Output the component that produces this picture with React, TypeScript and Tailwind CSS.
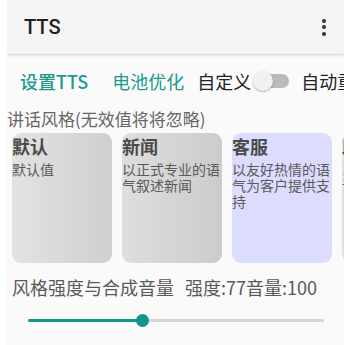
import React from "react";

const font = { fontFamily: '"Noto Sans CJK SC", "Noto Sans", sans-serif' };

type Style = { title: string; desc: string; bg: string };

const styles: Style[] = [
  { title: "默认", desc: "默认值", bg: "bg-gradient-to-r from-[#e3e3e3] to-[#cfcfcf]" },
  { title: "新闻", desc: "以正式专业的语气叙述新闻", bg: "bg-gradient-to-r from-[#dedede] to-[#cccccc]" },
  { title: "客服", desc: "以友好热情的语气为客户提供支持", bg: "bg-[#dcdcfe]" },
  { title: "助理", desc: "以热情而轻松的语气对话", bg: "bg-[#e0e0e0]" },
];

function StyleCard({ s }: { s: Style }) {
  return (
    <div className="flex h-[130px] w-[100px] shrink-0 flex-col overflow-hidden rounded-[9px]">
      <div className={`flex h-full flex-col ${s.bg}`}>
        <div className="h-[26px] text-[18px] font-bold leading-[26px] text-[#4a4a4a]">{s.title}</div>
        <div className="mt-[2px] break-all text-[14px] leading-[16px] text-[#5a5a5a]">{s.desc}</div>
      </div>
    </div>
  );
}

export default function App() {
  const value = 77;
  return (
    <div className="h-[345px] w-[350px] overflow-hidden bg-white" style={font}>
      <div className="ml-[7px] h-[345px] w-[337px] overflow-hidden bg-[#fafafa]">
        {/* toolbar */}
        <div className="relative flex h-[54px] items-center justify-between bg-[#f4f4f4] pl-[17px] pr-[18px] shadow-[0_1px_3px_rgba(0,0,0,0.18)]">
          <span className="text-[20px] font-medium text-[#212121]" style={{ fontFamily: '"Roboto", "Noto Sans", sans-serif' }}>
            TTS
          </span>
          <div className="flex flex-col gap-[2.5px]">
            <span className="h-[4px] w-[4px] rounded-full bg-[#333]" />
            <span className="h-[4px] w-[4px] rounded-full bg-[#333]" />
            <span className="h-[4px] w-[4px] rounded-full bg-[#333]" />
          </div>
        </div>

        {/* actions */}
        <div className="flex h-[54px] items-center overflow-hidden whitespace-nowrap pl-[13px] text-[18px]">
          <span className="shrink-0 font-medium text-[#1a9b8c]">设置TTS</span>
          <span className="ml-[24px] shrink-0 text-[#1a9b8c]">电池优化</span>
          <span className="ml-[13px] shrink-0 text-[#222]">自定义</span>
          <div className="relative ml-[2px] flex h-[20px] w-[36px] shrink-0 items-center">
            <div className="absolute right-0 h-[14px] w-[30px] rounded-full bg-[#bababa]" />
            <div className="absolute left-0 h-[20px] w-[20px] rounded-full bg-[#f1f1f1] shadow-[0_1px_2px_rgba(0,0,0,0.3)]" />
          </div>
          <span className="ml-[12px] shrink-0 text-[#222]">自动重播</span>
        </div>

        {/* style label */}
        <div className="flex h-[22px] items-center whitespace-nowrap text-[17px] text-[#666]">讲话风格(无效值将将忽略)</div>

        {/* style cards */}
        <div className="mt-[3px] flex gap-[10px] overflow-hidden pl-[5px]">
          {styles.map((s) => (
            <StyleCard key={s.title} s={s} />
          ))}
        </div>

        {/* strength / volume */}
        <div className="mt-[13px] flex h-[22px] items-center whitespace-nowrap pl-[5px] text-[18px] text-[#595959]">
          <span>风格强度与合成音量</span>
          <span className="ml-[11px]">强度:{value}音量:100</span>
        </div>

        {/* slider */}
        <div className="relative ml-[21px] mt-[10px] flex h-[24px] w-[296px] items-center">
          <div className="h-[3px] w-full rounded bg-[#d6d6d6]" />
          <div className="absolute left-0 h-[3px] w-[114px] rounded bg-[#119688]" />
          <div className="absolute left-[108px] h-[13px] w-[13px] rounded-full bg-[#119688]" />
        </div>
      </div>
    </div>
  );
}
